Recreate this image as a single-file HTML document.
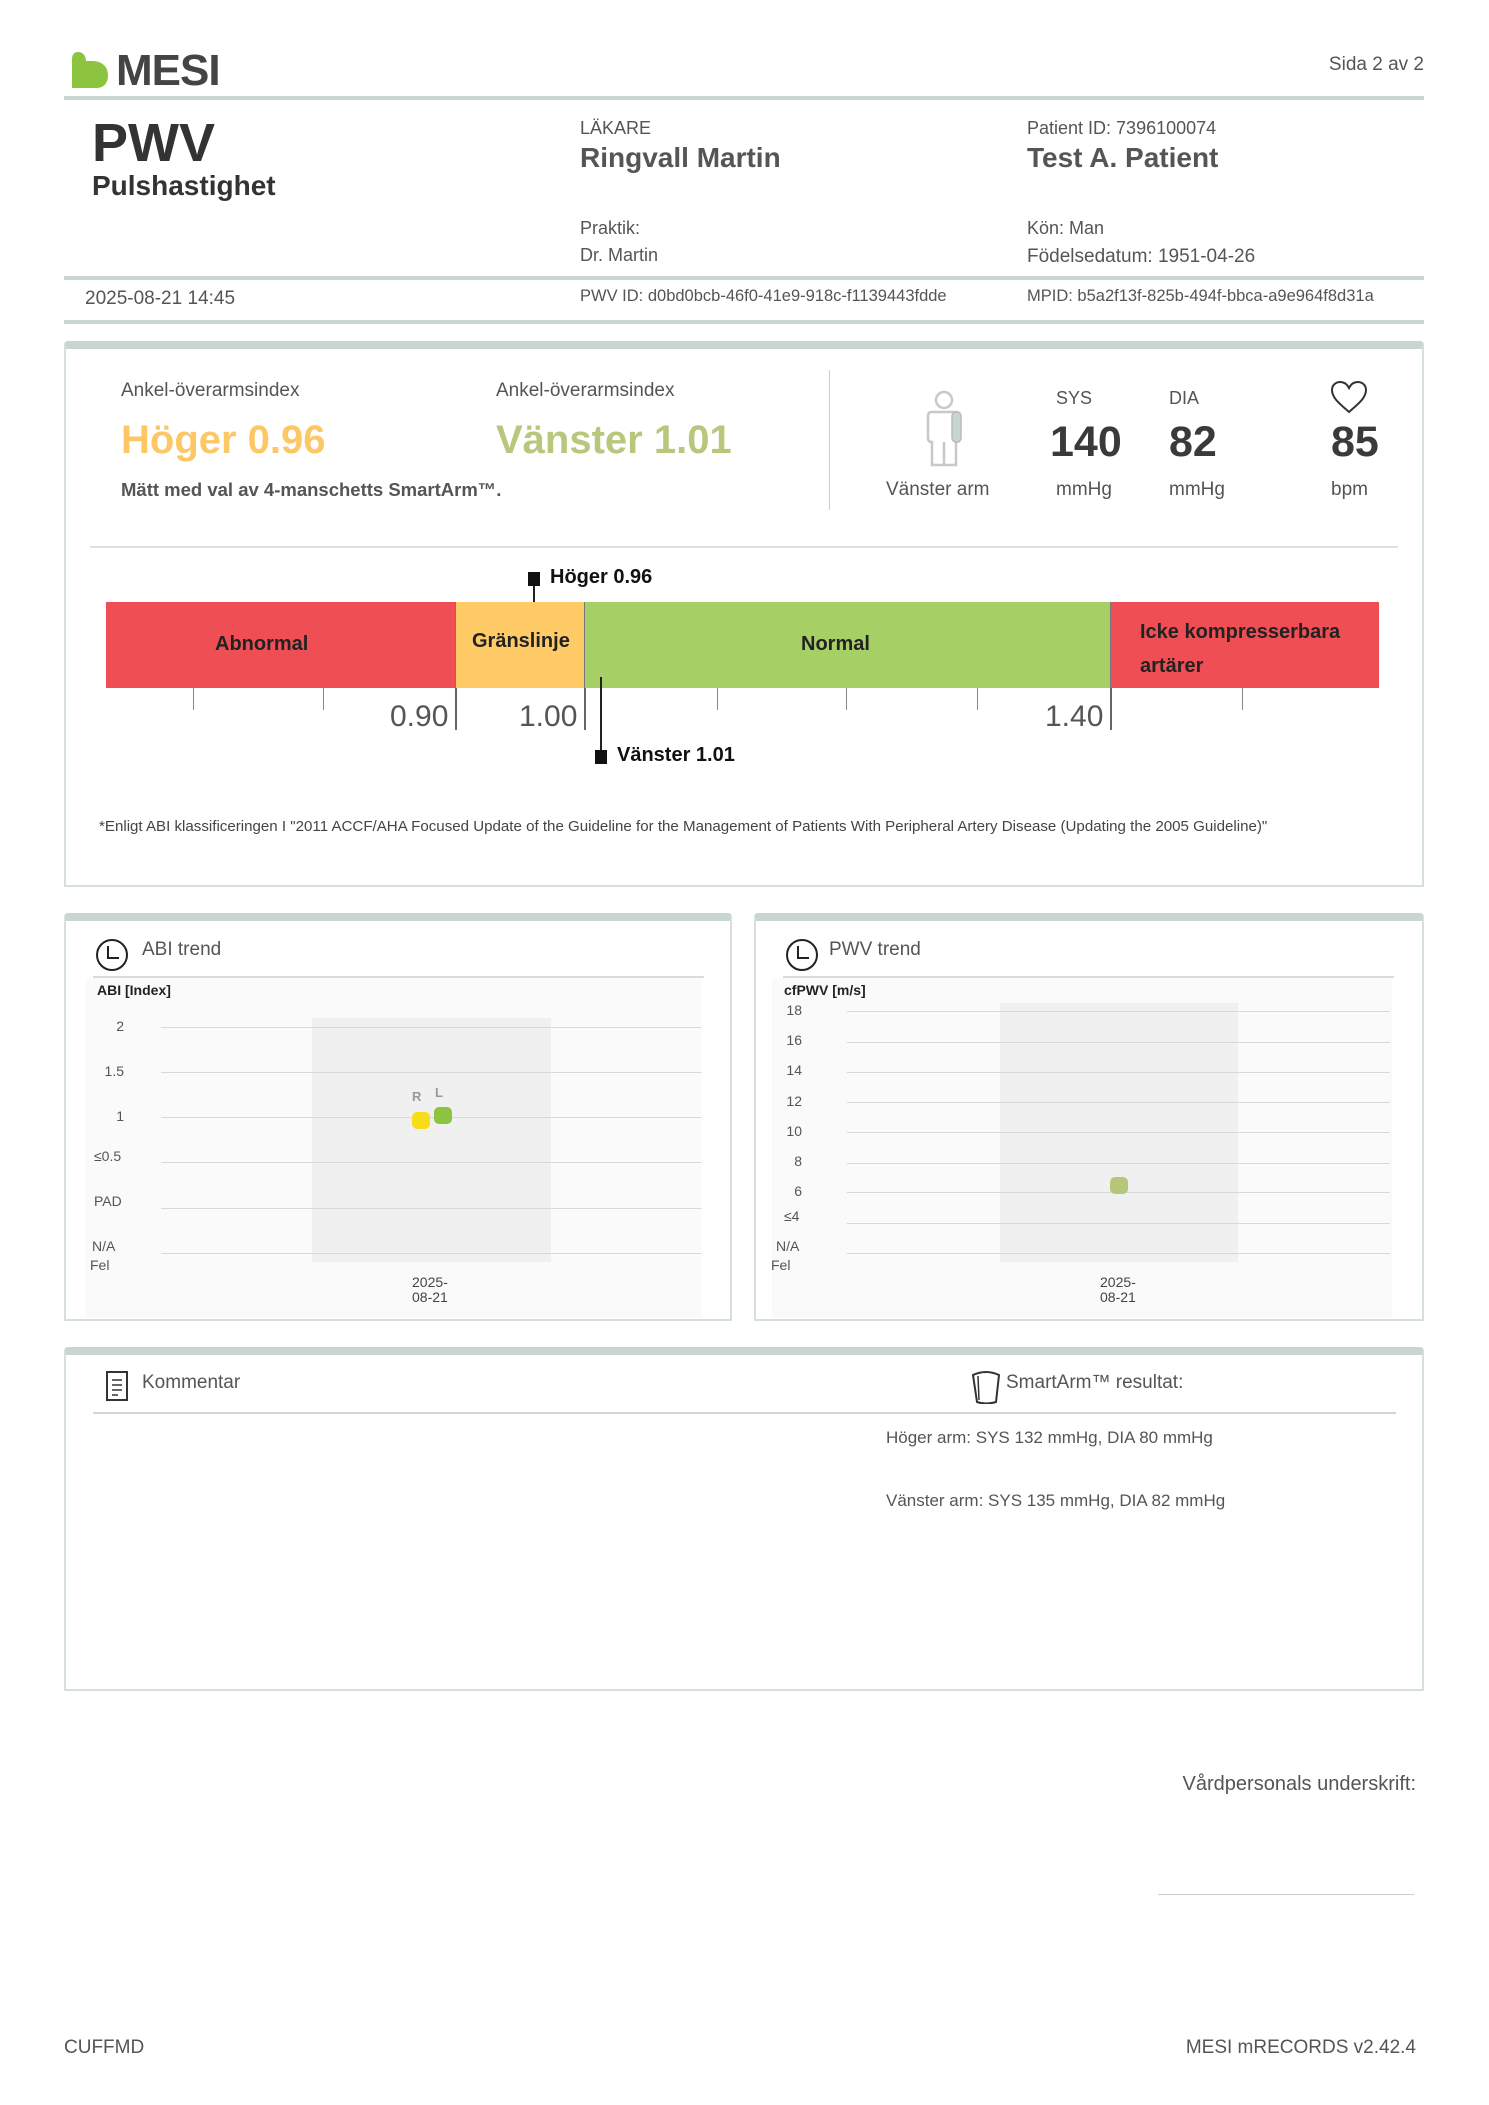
<!DOCTYPE html>
<html><head><meta charset="utf-8">
<style>
*{margin:0;padding:0;box-sizing:border-box}
body{width:1489px;height:2105px;background:#fff;font-family:"Liberation Sans",sans-serif;color:#555;position:relative;overflow:hidden}
.a{position:absolute;white-space:nowrap}
.line{position:absolute;background:#c9d6cf}
.card{position:absolute;border:2px solid #d5e0da;border-top:8px solid #c9d6cf;border-radius:4px 4px 0 0;background:#fff}
.g{position:absolute;height:1px;background:#d8d8d8}
.yl{position:absolute;font-size:14px;color:#555;text-align:right;width:40px}
</style></head><body>

<svg class="a" style="left:70px;top:50px" width="40" height="40" viewBox="0 0 40 40">
<path d="M8 2 C4 2 2 5 2 9 L2 38 L26 38 C34 38 38 33 38 25 C38 16 31 11 22 11 L16 11 C16 6 13 2 8 2 Z" fill="#8cc43f"/>
</svg>
<div class="a" style="left:116px;top:46px;font-size:44px;font-weight:bold;color:#444;letter-spacing:-1px">MESI</div>
<div class="a" style="right:65px;top:54px;font-size:19px;color:#555">Sida 2 av 2</div>
<div class="line" style="left:64px;top:96px;width:1360px;height:4px"></div>

<div class="a" style="left:92px;top:112px;font-size:54px;font-weight:bold;color:#333">PWV</div>
<div class="a" style="left:92px;top:170px;font-size:28px;font-weight:bold;color:#333">Pulshastighet</div>

<div class="a" style="left:580px;top:118px;font-size:18px">LÄKARE</div>
<div class="a" style="left:580px;top:142px;font-size:28px;font-weight:bold;color:#555">Ringvall Martin</div>
<div class="a" style="left:580px;top:218px;font-size:18px">Praktik:</div>
<div class="a" style="left:580px;top:245px;font-size:18px">Dr. Martin</div>

<div class="a" style="left:1027px;top:118px;font-size:18px">Patient ID: 7396100074</div>
<div class="a" style="left:1027px;top:142px;font-size:28px;font-weight:bold;color:#555">Test A. Patient</div>
<div class="a" style="left:1027px;top:218px;font-size:18px">Kön: Man</div>
<div class="a" style="left:1027px;top:246px;font-size:19px">Födelsedatum: 1951-04-26</div>

<div class="line" style="left:64px;top:276px;width:1360px;height:4px"></div>
<div class="a" style="left:85px;top:288px;font-size:19px">2025-08-21 14:45</div>
<div class="a" style="left:580px;top:287px;font-size:16.5px">PWV ID: d0bd0bcb-46f0-41e9-918c-f1139443fdde</div>
<div class="a" style="left:1027px;top:287px;font-size:16.5px">MPID: b5a2f13f-825b-494f-bbca-a9e964f8d31a</div>
<div class="line" style="left:64px;top:320px;width:1360px;height:4px"></div>

<div class="card" style="left:64px;top:341px;width:1360px;height:546px"></div>
<div class="a" style="left:121px;top:380px;font-size:19px">Ankel-överarmsindex</div>
<div class="a" style="left:496px;top:380px;font-size:19px">Ankel-överarmsindex</div>
<div class="a" style="left:121px;top:418px;font-size:40px;font-weight:bold;color:#fdc766">Höger 0.96</div>
<div class="a" style="left:496px;top:418px;font-size:40px;font-weight:bold;color:#b7c77c">Vänster 1.01</div>
<div class="a" style="left:121px;top:479px;font-size:18.5px;font-weight:bold;color:#555">Mätt med val av 4-manschetts SmartArm™.</div>
<div style="position:absolute;left:829px;top:370px;width:1px;height:140px;background:#ccc"></div>

<svg class="a" style="left:922px;top:390px" width="46" height="80" viewBox="0 0 46 80">
<g fill="none" stroke="#c8c8c8" stroke-width="2.5">
<circle cx="22" cy="10" r="8"/>
<path d="M10 22 L34 22 Q38 22 38 26 L38 48 Q38 52 34 52 L34 75 L22 75 L22 52 L22 75 L10 75 L10 52 Q6 52 6 48 L6 26 Q6 22 10 22 Z"/>
</g>
<rect x="30" y="22" width="9" height="30" rx="4" fill="#c9d6cf" stroke="#bbb" stroke-width="1.5"/>
</svg>
<div class="a" style="left:886px;top:479px;font-size:19px">Vänster arm</div>

<div class="a" style="left:1056px;top:388px;font-size:18px">SYS</div>
<div class="a" style="left:1050px;top:418px;font-size:43px;font-weight:bold;color:#3a3a3a">140</div>
<div class="a" style="left:1056px;top:479px;font-size:19px">mmHg</div>
<div class="a" style="left:1169px;top:388px;font-size:18px">DIA</div>
<div class="a" style="left:1169px;top:418px;font-size:43px;font-weight:bold;color:#3a3a3a">82</div>
<div class="a" style="left:1169px;top:479px;font-size:19px">mmHg</div>
<svg class="a" style="left:1330px;top:380px" width="38" height="34" viewBox="0 0 38 34">
<path d="M19 32 C10 24 2 18 2 10 C2 5 6 2 10 2 C14 2 17 4 19 8 C21 4 24 2 28 2 C32 2 36 5 36 10 C36 18 28 24 19 32 Z" fill="none" stroke="#333" stroke-width="2"/>
</svg>
<div class="a" style="left:1331px;top:418px;font-size:43px;font-weight:bold;color:#3a3a3a">85</div>
<div class="a" style="left:1331px;top:479px;font-size:19px">bpm</div>

<div style="position:absolute;left:90px;top:546px;width:1308px;height:2px;background:#dde3df"></div>

<div style="position:absolute;left:528px;top:572px;width:12px;height:14px;background:#111"></div>
<div style="position:absolute;left:533px;top:586px;width:2px;height:28px;background:#222"></div>
<div class="a" style="left:550px;top:566px;font-size:20px;font-weight:bold;color:#111">Höger 0.96</div>

<div style="position:absolute;left:106px;top:602px;width:350px;height:86px;background:#ef4f54"></div>
<div style="position:absolute;left:456px;top:602px;width:129px;height:86px;background:#fecb67"></div>
<div style="position:absolute;left:585px;top:602px;width:526px;height:86px;background:#a6d066"></div>
<div style="position:absolute;left:1111px;top:602px;width:268px;height:86px;background:#ef4f54"></div>
<div style="position:absolute;left:455px;top:602px;width:1px;height:86px;background:#777"></div>
<div style="position:absolute;left:584px;top:602px;width:1px;height:86px;background:#777"></div>
<div style="position:absolute;left:1110px;top:602px;width:1px;height:86px;background:#777"></div>
<div class="a" style="left:215px;top:633px;font-size:20px;font-weight:bold;color:#222">Abnormal</div>
<div class="a" style="left:472px;top:630px;font-size:20px;font-weight:bold;color:#222">Gränslinje</div>
<div class="a" style="left:801px;top:633px;font-size:20px;font-weight:bold;color:#222">Normal</div>
<div class="a" style="left:1140px;top:615px;font-size:20px;font-weight:bold;color:#222;line-height:34px">Icke kompresserbara<br>artärer</div>

<div style="position:absolute;left:193px;top:688px;width:1px;height:22px;background:#888"></div>
<div style="position:absolute;left:323px;top:688px;width:1px;height:22px;background:#888"></div>
<div style="position:absolute;left:455px;top:688px;width:1.5px;height:42px;background:#666"></div>
<div style="position:absolute;left:584px;top:688px;width:1.5px;height:42px;background:#666"></div>
<div style="position:absolute;left:717px;top:688px;width:1px;height:22px;background:#888"></div>
<div style="position:absolute;left:846px;top:688px;width:1px;height:22px;background:#888"></div>
<div style="position:absolute;left:977px;top:688px;width:1px;height:22px;background:#888"></div>
<div style="position:absolute;left:1110px;top:688px;width:1.5px;height:42px;background:#666"></div>
<div style="position:absolute;left:1242px;top:688px;width:1px;height:22px;background:#888"></div>
<div class="a" style="left:390px;top:700px;font-size:30px;color:#555">0.90</div>
<div class="a" style="left:519px;top:700px;font-size:30px;color:#555">1.00</div>
<div class="a" style="left:1045px;top:700px;font-size:30px;color:#555">1.40</div>

<div style="position:absolute;left:600px;top:677px;width:2px;height:78px;background:#222"></div>
<div style="position:absolute;left:595px;top:750px;width:12px;height:14px;background:#111"></div>
<div class="a" style="left:617px;top:744px;font-size:20px;font-weight:bold;color:#111">Vänster 1.01</div>

<div class="a" style="left:99px;top:818px;font-size:15.1px;color:#444">*Enligt ABI klassificeringen I "2011 ACCF/AHA Focused Update of the Guideline for the Management of Patients With Peripheral Artery Disease (Updating the 2005 Guideline)"</div>

<div class="card" style="left:64px;top:913px;width:668px;height:408px"></div>
<svg class="a" style="left:95px;top:938px" width="34" height="34" viewBox="0 0 34 34"><circle cx="17" cy="17" r="15" fill="none" stroke="#222" stroke-width="2"/><path d="M13 8 L13 20 L24 20" fill="none" stroke="#222" stroke-width="2"/></svg>
<div class="a" style="left:142px;top:939px;font-size:19px">ABI trend</div>
<div style="position:absolute;left:93px;top:976px;width:611px;height:2px;background:#d7dfdb"></div>
<div style="position:absolute;left:86px;top:978px;width:616px;height:340px;background:#fafafa"></div>
<div style="position:absolute;left:312px;top:1018px;width:239px;height:244px;background:#f0f0f0"></div>
<div class="a" style="left:97px;top:982px;font-size:14px;font-weight:bold;color:#222">ABI [Index]</div>
<div class="g" style="left:161px;top:1027px;width:540px"></div>
<div class="g" style="left:161px;top:1072px;width:540px"></div>
<div class="g" style="left:161px;top:1117px;width:540px"></div>
<div class="g" style="left:161px;top:1162px;width:540px"></div>
<div class="g" style="left:161px;top:1208px;width:540px"></div>
<div class="g" style="left:161px;top:1253px;width:540px"></div>
<div class="yl" style="left:84px;top:1018px">2</div>
<div class="yl" style="left:84px;top:1063px">1.5</div>
<div class="yl" style="left:84px;top:1108px">1</div>
<div class="a" style="left:94px;top:1148px;font-size:14px">≤0.5</div>
<div class="a" style="left:94px;top:1193px;font-size:14px">PAD</div>
<div class="a" style="left:92px;top:1238px;font-size:14px">N/A</div>
<div class="a" style="left:90px;top:1257px;font-size:14px">Fel</div>
<div class="a" style="left:412px;top:1089px;font-size:13px;font-weight:bold;color:#999">R</div>
<div class="a" style="left:435px;top:1085px;font-size:13px;font-weight:bold;color:#999">L</div>
<div style="position:absolute;left:412px;top:1112px;width:18px;height:17px;border-radius:5px;background:#f9dd1b"></div>
<div style="position:absolute;left:434px;top:1107px;width:18px;height:17px;border-radius:5px;background:#8cc43f"></div>
<div class="a" style="left:412px;top:1275px;font-size:14px;line-height:15px;text-align:center;color:#444">2025-<br>08-21</div>

<div class="card" style="left:754px;top:913px;width:670px;height:408px"></div>
<svg class="a" style="left:785px;top:938px" width="34" height="34" viewBox="0 0 34 34"><circle cx="17" cy="17" r="15" fill="none" stroke="#222" stroke-width="2"/><path d="M13 8 L13 20 L24 20" fill="none" stroke="#222" stroke-width="2"/></svg>
<div class="a" style="left:829px;top:939px;font-size:19px">PWV trend</div>
<div style="position:absolute;left:783px;top:976px;width:611px;height:2px;background:#d7dfdb"></div>
<div style="position:absolute;left:772px;top:978px;width:620px;height:340px;background:#fafafa"></div>
<div style="position:absolute;left:1000px;top:1003px;width:238px;height:259px;background:#f0f0f0"></div>
<div class="a" style="left:784px;top:982px;font-size:14px;font-weight:bold;color:#222">cfPWV [m/s]</div>
<div class="g" style="left:847px;top:1011px;width:543px"></div>
<div class="g" style="left:847px;top:1042px;width:543px"></div>
<div class="g" style="left:847px;top:1072px;width:543px"></div>
<div class="g" style="left:847px;top:1102px;width:543px"></div>
<div class="g" style="left:847px;top:1132px;width:543px"></div>
<div class="g" style="left:847px;top:1163px;width:543px"></div>
<div class="g" style="left:847px;top:1192px;width:543px"></div>
<div class="g" style="left:847px;top:1223px;width:543px"></div>
<div class="g" style="left:847px;top:1253px;width:543px"></div>
<div class="yl" style="left:762px;top:1002px">18</div>
<div class="yl" style="left:762px;top:1032px">16</div>
<div class="yl" style="left:762px;top:1062px">14</div>
<div class="yl" style="left:762px;top:1093px">12</div>
<div class="yl" style="left:762px;top:1123px">10</div>
<div class="yl" style="left:762px;top:1153px">8</div>
<div class="yl" style="left:762px;top:1183px">6</div>
<div class="a" style="left:784px;top:1208px;font-size:14px">≤4</div>
<div class="a" style="left:776px;top:1238px;font-size:14px">N/A</div>
<div class="a" style="left:771px;top:1257px;font-size:14px">Fel</div>
<div style="position:absolute;left:1110px;top:1177px;width:18px;height:17px;border-radius:5px;background:#b5c77a"></div>
<div class="a" style="left:1100px;top:1275px;font-size:14px;line-height:15px;text-align:center;color:#444">2025-<br>08-21</div>

<div class="card" style="left:64px;top:1347px;width:1360px;height:344px"></div>
<svg class="a" style="left:106px;top:1371px" width="22" height="30" viewBox="0 0 22 30"><rect x="1" y="1" width="20" height="28" fill="none" stroke="#333" stroke-width="2"/><path d="M6 9 H16 M6 14 H16 M6 19 H16 M6 24 H12" stroke="#333" stroke-width="1.6"/></svg>
<div class="a" style="left:142px;top:1372px;font-size:19px">Kommentar</div>
<svg class="a" style="left:970px;top:1370px" width="32" height="34" viewBox="0 0 32 34"><path d="M3 5 Q16 -1 29 5 L26 32 Q16 35 7 32 Z" fill="none" stroke="#333" stroke-width="2"/><path d="M8 6 L9 30" stroke="#333" stroke-width="1.5"/></svg>
<div class="a" style="left:1006px;top:1372px;font-size:19px">SmartArm™ resultat:</div>
<div style="position:absolute;left:93px;top:1412px;width:1303px;height:2px;background:#cfd8d3"></div>
<div class="a" style="left:886px;top:1428px;font-size:17px">Höger arm: SYS 132 mmHg, DIA 80 mmHg</div>
<div class="a" style="left:886px;top:1491px;font-size:17px">Vänster arm: SYS 135 mmHg, DIA 82 mmHg</div>

<div class="a" style="right:73px;top:1773px;font-size:20px">Vårdpersonals underskrift:</div>
<div style="position:absolute;left:1158px;top:1894px;width:256px;height:1px;background:#ccc"></div>

<div class="a" style="left:64px;top:2037px;font-size:19px">CUFFMD</div>
<div class="a" style="right:73px;top:2037px;font-size:19px">MESI mRECORDS v2.42.4</div>
</body></html>
